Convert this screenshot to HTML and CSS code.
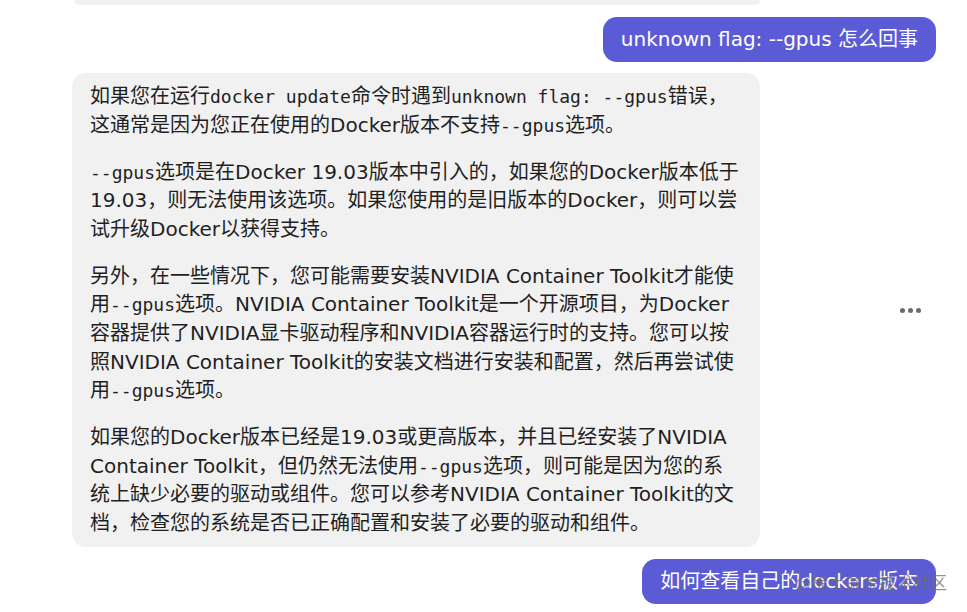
FILE: index.html
```html
<!DOCTYPE html>
<html lang="zh-CN">
<head>
<meta charset="utf-8">
<title>Chat</title>
<link rel="stylesheet" href="styles.css">
</head>
<body>
<div class="chat">
  <div class="prev-tail"></div>

  <div class="row row-user">
    <div class="bubble-user">unknown flag: --gpus 怎么回事</div>
  </div>

  <div class="row row-bot">
    <div class="bubble-bot">
      <p>如果您在运行<code>docker update</code>命令时遇到<code>unknown flag: --gpus</code>错误，这通常是因为您正在使用的Docker版本不支持<code>--gpus</code>选项。</p>
      <p><code>--gpus</code>选项是在Docker 19.03版本中引入的，如果您的Docker版本低于19.03，则无法使用该选项。如果您使用的是旧版本的Docker，则可以尝试升级Docker以获得支持。</p>
      <p>另外，在一些情况下，您可能需要安装NVIDIA Container Toolkit才能使用<code>--gpus</code>选项。NVIDIA Container Toolkit是一个开源项目，为Docker容器提供了NVIDIA显卡驱动程序和NVIDIA容器运行时的支持。您可以按照NVIDIA Container Toolkit的安装文档进行安装和配置，然后再尝试使用<code>--gpus</code>选项。</p>
      <p>如果您的Docker版本已经是19.03或更高版本，并且已经安装了NVIDIA Container Toolkit，但仍然无法使用<code>--gpus</code>选项，则可能是因为您的系统上缺少必要的驱动或组件。您可以参考NVIDIA Container Toolkit的文档，检查您的系统是否已正确配置和安装了必要的驱动和组件。</p>
    </div>
    <div class="more" aria-label="更多">
      <span class="dot"></span><span class="dot"></span><span class="dot"></span>
    </div>
  </div>

  <div class="row row-user">
    <div class="bubble-user">如何查看自己的dockers版本</div>
  </div>
</div>
<div class="watermark">@稀土掘金技术社区</div>
</body>
</html>
```

FILE: styles.css
```css
html, body {
  margin: 0;
  padding: 0;
  background: #ffffff;
  overflow: hidden;
}

body {
  width: 967px;
  height: 612px;
  position: relative;
  font-family: "DejaVu Sans", "Noto Sans CJK SC", sans-serif;
  color: #1f1f1f;
}

.chat {
  display: flex;
  flex-direction: column;
  padding: 0 31px 0 72px;
}

.prev-tail {
  width: 686px;
  margin-left: 2px;
  height: 5px;
  background: #f1f1f1;
  border-radius: 0 0 12px 12px;
}

.row {
  display: flex;
}

.row-user {
  justify-content: flex-end;
  margin-top: 12px;
}

.row-bot {
  margin-top: 11px;
  align-items: center;
  justify-content: space-between;
}

.bubble-user {
  background: #5b5bd6;
  color: #ffffff;
  font-size: 20px;
  line-height: 29px;
  padding: 8px 18px;
  border-radius: 14px;
}

.bubble-bot {
  width: 652px;
  background: #f1f1f1;
  border-radius: 14px;
  padding: 9px 18px 10px 18px;
  font-size: 20px;
  line-height: 28.6px;
}

.bubble-bot p {
  margin: 0;
}

.bubble-bot p + p {
  margin-top: 18.4px;
}

.bubble-bot code {
  font-family: "DejaVu Sans Mono", monospace;
  font-size: 18px;
  line-height: 1;
}

.more {
  display: flex;
  gap: 3px;
  margin-right: 15px;
}

.dot {
  width: 5px;
  height: 5px;
  border-radius: 50%;
  background: #6b6b6b;
}

.watermark {
  position: absolute;
  right: 20px;
  bottom: 22px;
  font-family: "Noto Sans CJK SC", sans-serif;
  font-size: 17px;
  line-height: 1;
  color: rgba(110, 110, 110, 0.75);
}
```
